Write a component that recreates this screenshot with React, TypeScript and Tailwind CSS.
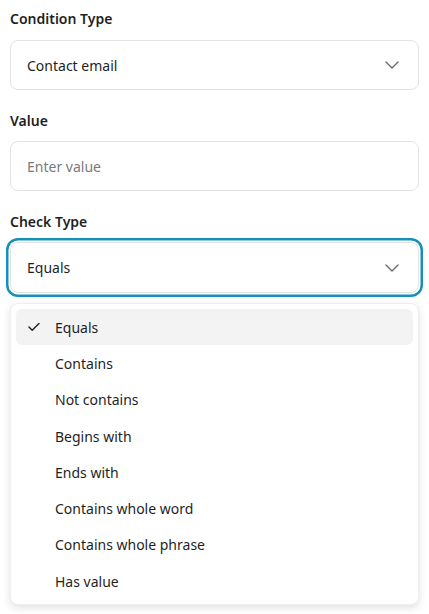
import { useState } from 'react';

// ── Data ──

const CHECK_TYPES = [
  'Equals',
  'Contains',
  'Not contains',
  'Begins with',
  'Ends with',
  'Contains whole word',
  'Contains whole phrase',
  'Has value',
];

// ── Icons ──

function Chevron() {
  return (
    <svg width="14" height="8" viewBox="0 0 14 8" fill="none" className="text-[#6b6b6b]">
      <polyline points="1,1 7,7 13,1" stroke="currentColor" strokeWidth="1.4" strokeLinecap="round" strokeLinejoin="round" />
    </svg>
  );
}

function Check() {
  return (
    <svg width="12" height="9" viewBox="0 0 12 9" fill="none" className="text-[#1f1f1f]">
      <polyline points="1,4.5 4.2,7.7 11,1" stroke="currentColor" strokeWidth="1.4" strokeLinecap="round" strokeLinejoin="round" />
    </svg>
  );
}

// ── Component ──

export default function App() {
  const [checkType, setCheckType] = useState('Equals');

  return (
    <div className="w-[429px] min-h-[614px] bg-white px-2.5 pt-[9px] text-[14px] text-[#1f1f1f] [font-family:'Noto_Sans',sans-serif]">
      {/* Condition Type */}
      <label className="block h-5 leading-5 font-semibold">Condition Type</label>
      <button className="mt-[11px] flex h-[50px] w-full items-center justify-between rounded-lg border border-[#e3e3e3] bg-white pl-4 pr-[19px] text-left">
        <span>Contact email</span>
        <Chevron />
      </button>

      {/* Value */}
      <label className="mt-[21px] block h-5 leading-5 font-semibold">Value</label>
      <input
        placeholder="Enter value"
        className="mt-2.5 block h-[50px] w-full rounded-lg border border-[#e3e3e3] bg-white px-4 outline-none placeholder:text-[#7a7a7a]"
      />

      {/* Check Type */}
      <label className="mt-[21px] block h-5 leading-5 font-semibold">Check Type</label>
      <div className="relative mt-2.5">
        <button className="flex h-[51px] w-full items-center justify-between rounded-lg border border-[#e3e3e3] bg-white pl-4 pr-[19px] text-left ring-[2.5px] ring-[#1590b8] ring-offset-[1.5px]">
          <span>{checkType}</span>
          <Chevron />
        </button>

        {/* Open menu */}
        <div className="absolute left-0 right-0 top-full mt-[10px] rounded-lg border border-[#efefef] bg-white p-[5px] shadow-[0_3px_8px_rgba(0,0,0,0.12)]">
          {CHECK_TYPES.map(t => (
            <div
              key={t}
              onClick={() => setCheckType(t)}
              className={`relative flex h-[36.3px] items-center rounded-md pl-[39px] ${t === checkType ? 'bg-[#f3f3f3]' : ''}`}
            >
              {t === checkType && (
                <span className="absolute left-[12px] top-1/2 -translate-y-1/2 flex">
                  <Check />
                </span>
              )}
              {t}
            </div>
          ))}
        </div>
      </div>
    </div>
  );
}
